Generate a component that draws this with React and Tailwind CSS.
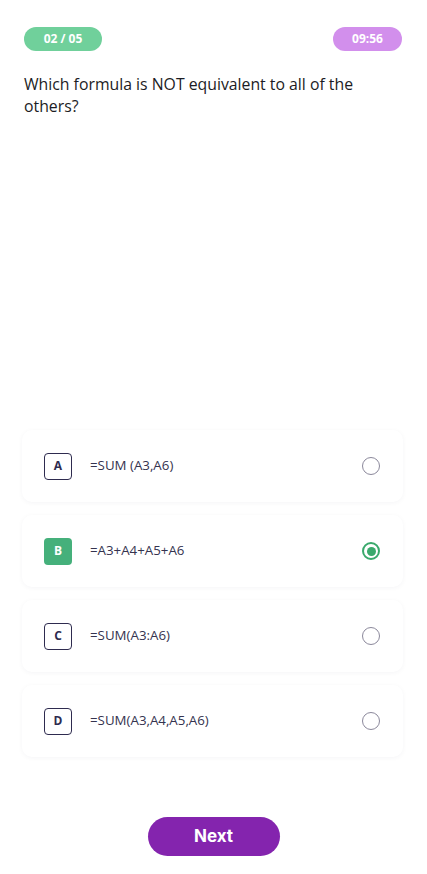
const OPTIONS = [
  { key: "A", text: "=SUM (A3,A6)" },
  { key: "B", text: "=A3+A4+A5+A6" },
  { key: "C", text: "=SUM(A3:A6)" },
  { key: "D", text: "=SUM(A3,A4,A5,A6)" },
];

function Option({ letter, text, selected }) {
  return (
    <div className="flex h-[72px] items-center rounded-[10px] bg-white pl-[22px] pr-[23px] shadow-[0_1px_5px_rgba(30,30,60,0.045)]">
      <span
        className={`flex h-[27px] w-[28px] items-center justify-center rounded-[4px] text-[12px] font-bold ${
          selected
            ? "bg-[#45b07b] text-white"
            : "border border-[#2e2b4f] text-[#2e2b4f]"
        }`}
      >
        {letter}
      </span>
      <span className="ml-[18px] flex-1 text-[13.3px] text-[#35334f]">
        {text}
      </span>
      {selected ? (
        <span className="flex h-[18px] w-[18px] items-center justify-center rounded-full border-2 border-[#3aa96c]">
          <span className="h-[9px] w-[9px] rounded-full bg-[#3aa96c]" />
        </span>
      ) : (
        <span className="h-[18px] w-[18px] rounded-full border-[1.5px] border-[#8b889b]" />
      )}
    </div>
  );
}

export default function App() {
  const selected = "B";
  return (
    <div className="flex h-[874px] flex-col bg-white font-['Open_Sans',sans-serif]">
      <div className="flex items-center justify-between px-6 pt-[27px]">
        <span className="flex h-6 w-[78px] items-center justify-center rounded-full bg-[#70d09b] text-[12px] font-bold text-white">
          02 / 05
        </span>
        <span className="mr-px flex h-6 w-[69px] items-center justify-center rounded-full bg-[#d28fec] text-[12px] font-bold text-white">
          09:56
        </span>
      </div>

      <p className="mt-[22px] px-6 text-[15.8px] leading-[22px] text-[#1c1c24]">
        Which formula is NOT equivalent to all of the others?
      </p>

      <div className="mt-auto flex flex-col gap-[13px] px-[22px] pr-6">
        {OPTIONS.map((o) => (
          <Option
            key={o.key}
            letter={o.key}
            text={o.text}
            selected={o.key === selected}
          />
        ))}
      </div>

      <div className="mt-[60px] flex justify-center pb-[18px]">
        <button className="h-[39px] w-[132px] rounded-full bg-[#8424ae] font-['Inter',sans-serif] text-[17px] font-bold text-white">
          Next
        </button>
      </div>
    </div>
  );
}
